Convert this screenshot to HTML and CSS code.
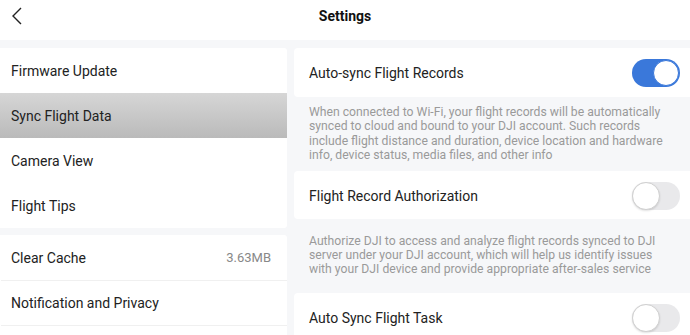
FILE: index.html
```html
<!DOCTYPE html>
<html lang="en">
<head>
    <meta charset="UTF-8">
    <meta name="viewport" content="width=device-width, initial-scale=1.0">
    <title>Settings</title>
    <link rel="stylesheet" href="styles.css">
</head>
<body>
    <header class="topbar">
        <button class="back" aria-label="Back">
            <svg width="12" height="20" viewBox="0 0 12 20">
                <path d="M10 2 L2 10 L10 18" fill="none" stroke="#222" stroke-width="1.4"/>
            </svg>
        </button>
        <h1>Settings</h1>
    </header>

    <div class="layout">
        <nav class="sidebar">
            <ul class="menu">
                <li class="menu-item">Firmware Update</li>
                <li class="menu-item active">Sync Flight Data</li>
                <li class="menu-item">Camera View</li>
                <li class="menu-item">Flight Tips</li>
            </ul>
            <ul class="menu divided">
                <li class="menu-item">Clear Cache <span class="value">3.63MB</span></li>
                <li class="menu-item">Notification and Privacy</li>
                <li class="menu-item"></li>
            </ul>
        </nav>

        <section class="content">
            <div class="option">
                <span>Auto-sync Flight Records</span>
                <span class="switch on"></span>
            </div>
            <p class="hint hint-tight">When connected to Wi-Fi, your flight records will be automatically synced to cloud and bound to your DJI account. Such records include flight distance and duration, device location and hardware info, device status, media files, and other info</p>

            <div class="option">
                <span>Flight Record Authorization</span>
                <span class="switch"></span>
            </div>
            <p class="hint">Authorize DJI to access and analyze flight records synced to DJI server under your DJI account, which will help us identify issues with your DJI device and provide appropriate after-sales service</p>

            <div class="option">
                <span>Auto Sync Flight Task</span>
                <span class="switch"></span>
            </div>
        </section>
    </div>
</body>
</html>
```

FILE: styles.css
```css
html, body {
    margin: 0;
    padding: 0;
}
body {
    width: 690px;
    height: 335px;
    overflow: hidden;
    background: #f6f7f9;
    font-family: Roboto, "Liberation Sans", sans-serif;
    color: #222;
}
.topbar {
    height: 40px;
    background: #fff;
    display: flex;
    align-items: center;
    justify-content: center;
    position: relative;
}
.topbar h1 {
    margin: 0;
    font-size: 14px;
    font-weight: bold;
    color: #111;
    line-height: 1;
    margin-top: -8px;
}
.back {
    position: absolute;
    left: 11px;
    top: 6px;
    border: none;
    background: none;
    padding: 0;
    width: 12px;
    height: 20px;
    cursor: pointer;
}
.back svg {
    display: block;
}
.layout {
    display: grid;
    grid-template-columns: 287px 1fr;
    column-gap: 7px;
    padding-top: 8px;
}
.sidebar {
    display: flex;
    flex-direction: column;
    gap: 7px;
}
.menu {
    list-style: none;
    margin: 0;
    padding: 0;
    background: #fff;
    border-radius: 0 3px 3px 0;
}
.menu-item {
    height: 45px;
    display: flex;
    align-items: center;
    justify-content: space-between;
    padding: 0 16px 0 11px;
    font-size: 14px;
}
.menu-item.active {
    background: linear-gradient(#d6d6d6, #bababa);
}
.divided .menu-item + .menu-item {
    box-shadow: inset 15px 1px 0 -14px #fff, inset 0 1px 0 #f0f0f0;
}
.value {
    color: #888;
    font-size: 13px;
}
.content {
    display: flex;
    flex-direction: column;
}
.option {
    height: 49px;
    background: #fff;
    border-radius: 4px 0 0 4px;
    display: flex;
    align-items: center;
    justify-content: space-between;
    padding: 0 10px 0 15px;
    font-size: 14px;
}
.option + .hint + .option {
    height: 48px;
    padding-top: 2px;
    box-sizing: border-box;
}
.switch {
    width: 48px;
    height: 28px;
    border-radius: 14px;
    background: #e9e9eb;
    position: relative;
    box-sizing: border-box;
}
.switch::after {
    content: "";
    position: absolute;
    left: 0;
    top: 0;
    width: 28px;
    height: 28px;
    box-sizing: border-box;
    border-radius: 50%;
    background: #fff;
    border: 1px solid #d0d0d0;
    box-shadow: 0 1px 2px rgba(0,0,0,0.12);
}
.switch.on {
    background: #3a78da;
}
.switch.on::after {
    left: 21px;
    top: 1px;
    width: 26px;
    height: 26px;
    border: 1px solid #3a78da;
    box-shadow: none;
}
.hint {
    margin: 0;
    min-height: 74px;
    box-sizing: border-box;
    padding: 15px 15px;
    font-size: 12.2px;
    line-height: 14.4px;
    color: #9a9a9a;
}
.hint-tight {
    padding-top: 8px;
    padding-bottom: 8px;
    min-height: 73px;
}
```
